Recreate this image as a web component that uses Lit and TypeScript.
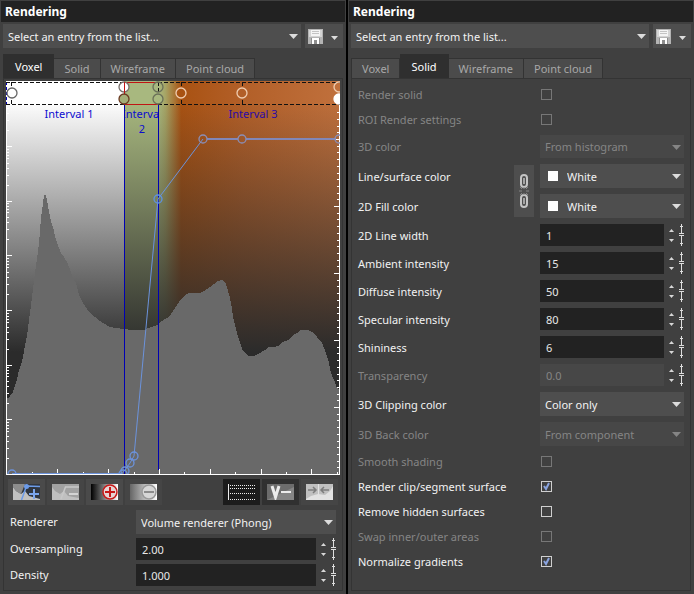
import { LitElement, html, css, svg, nothing } from "lit";
import { customElement, property } from "lit/decorators.js";

const controls = css`
  * { box-sizing: border-box; }
  button, input, select {
    margin: 0;
    padding: 0;
    border: 0;
    border-radius: 0;
    color: inherit;
    font: inherit;
    background: none;
  }
  svg { display: block; }
`;

/** Drop-down with the flat triangle and an optional colour swatch. */
@customElement("pick-list")
export class PickList extends LitElement {
  @property() value = "";
  @property() name = "";
  @property() swatch = "";
  @property({ type: Boolean }) disabled = false;

  static styles = [controls, css`
    :host { display: block; position: relative; height: 24px; background: #4e4e4e; color: #f2f2f2; }
    :host([disabled]) { background: #474747; color: #858585; }
    select { appearance: none; width: 100%; height: 100%; padding: 1px 18px 0 5px; opacity: 1; outline-offset: -1px; }
    .swatched { padding-left: 27px; }
    .swatch { position: absolute; left: 8px; top: 7px; width: 10px; height: 10px; pointer-events: none; }
    .arrow { position: absolute; right: 3px; top: 10px; pointer-events: none; fill: #dcdcdc; }
    :host([disabled]) .arrow { fill: #858585; }
  `];

  render() {
    return html`
      <select class=${this.swatch ? "swatched" : ""} aria-label=${this.name} ?disabled=${this.disabled}>
        <option>${this.value}</option>
      </select>
      ${this.swatch ? html`<span class="swatch" style="background:${this.swatch}"></span>` : nothing}
      <svg class="arrow" width="9" height="5"><path d="M0 0H9L4.5 5Z"/></svg>`;
  }
}

/** Number box with step arrows and a drag handle. */
@customElement("number-box")
export class NumberBox extends LitElement {
  @property() value = "";
  @property() name = "";
  @property({ type: Boolean }) disabled = false;

  static styles = [controls, css`
    :host { display: flex; height: 22px; color: #e8e8e8; }
    input { flex: 1; min-width: 0; padding: 1px 6px 0; background: #222; }
    input:disabled { background: #474747; color: #858585; }
    .steps { display: flex; flex-direction: column; justify-content: center; gap: 7px; width: 11px; margin-left: 2px; align-items: center; }
    .steps svg { fill: #d8d8d8; }
    .drag { width: 7px; }
  `];

  render() {
    return html`
      <input type="text" inputmode="decimal" aria-label=${this.name} .value=${this.value} ?disabled=${this.disabled}>
      <div class="steps">
        <button aria-label="Increase ${this.name}"><svg width="5" height="3"><path d="M0 3H5L2.5 0Z"/></svg></button>
        <button aria-label="Decrease ${this.name}"><svg width="5" height="3"><path d="M0 0H5L2.5 3Z"/></svg></button>
      </div>
      <button class="drag" aria-label="Drag ${this.name}">
        <svg width="7" height="22" fill="none" stroke="#dedede">
          <path d="M4.5 0V10M4.5 12V22M3 2.5H6M3 19.5H6M2 9.5H7M2 11.5H7"/>
        </svg>
      </button>`;
  }
}

/** Pane frame: title bar, preset row, tab strip and a bordered page. */
@customElement("render-pane")
export class RenderPane extends LitElement {
  @property() active = "";

  static styles = [controls, css`
    :host { display: flex; flex-direction: column; min-width: 0; background: #404040; padding: 1px 0 3px; }
    h2 { margin: 0 1px; padding: 0 4px; height: 21px; font-size: 12px; line-height: 21px; font-weight: 700; color: #fff; background: #222; }
    .presets { display: flex; gap: 4px; margin: 2px 3px 6px; }
    pick-list { flex: 1; }
    .save { display: flex; width: 38px; background: #4e4e4e; }
    .save button { display: flex; align-items: center; justify-content: center; }
    .disk { width: 21px; }
    .more { width: 17px; padding-top: 3px; }
    .tabs { display: flex; align-items: flex-end; margin: 0 3px; height: 24px; }
    .tab { height: 20px; padding: 0 10px; line-height: 20px; background: #4b4b4b; color: #a8a8a8; border: solid #333; border-width: 1px 1px 0 0; }
    .tab:first-child { border-left-width: 1px; }
    .tab.on { height: 24px; padding: 0 11px; line-height: 24px; background: #2f2f2f; color: #fff; border-color: #2f2f2f; }
    .page { flex: 1; margin: 0 3px; border: 1px solid #343434; }
  `];

  render() {
    return html`
      <h2>Rendering</h2>
      <div class="presets">
        <pick-list name="Preset" value="Select an entry from the list..."></pick-list>
        <div class="save">
          <button class="disk" aria-label="Save preset">
            <svg width="15" height="15">
              <path fill="#b4b4b4" d="M0 0H15V15H0Z"/>
              <path fill="#d4d4d4" d="M1 1H14V8H1Z"/>
              <path fill="#f4f4f4" d="M3 1H12V7H3Z"/>
              <path stroke="#c4c4c4" d="M4 2.5H11M4 4.5H11"/>
              <path fill="#8e8e8e" d="M3 9H12V15H3Z"/>
              <path fill="#fff" d="M4 9H11V15H9V11H6V15H4Z"/>
            </svg>
          </button>
          <button class="more" aria-label="Save options">
            <svg width="7" height="4" fill="#dcdcdc"><path d="M0 0H7L3.5 4Z"/></svg>
          </button>
        </div>
      </div>
      <div class="tabs" role="tablist">
        ${["Voxel", "Solid", "Wireframe", "Point cloud"].map((t) => html`
          <button role="tab" class="tab ${t === this.active ? "on" : ""}" aria-selected=${t === this.active}>${t}</button>`)}
      </div>
      <div class="page"><slot></slot></div>`;
  }
}

/** Histogram, transfer curve and colour stops of the voxel intervals. */
@customElement("transfer-plot")
export class TransferPlot extends LitElement {
  static styles = [controls, css`
    :host { display: block; }
    .plot { width: 100%; height: auto; }
    .caption { font: 11px "Noto Sans", sans-serif; text-anchor: middle; fill: #0c0cd0; }
    .caption.dark { fill: #2a0aa8; }
  `];

  private histogram =
    "7,474 7,398 9,398 11,394 13,393 14,388 17,380 19,370 22,362 24,351 27,336 29,320 31,305 33,289 35,273 37,259 39,243 41,218 43,203 44,195 46,195 48,205 49,212 51,221 53,227 55,236 57,243 61,253 64,257 67,262 71,272 73,278 76,283 78,291 80,297 83,303 87,309 91,314 95,317 100,321 105,324 110,327 115,328 125,329 130,330 145,330 148,328 152,327 157,325 162,321 167,318 171,314 175,308 179,302 183,297 186,294 189,293 200,293 204,291 210,287 214,284 218,281 222,280 225,282 227,287 230,298 232,308 233,317 235,325 237,333 240,343 243,351 246,354 249,356 254,356 260,353 265,350 269,347 274,347 278,346 283,342 288,340 292,336 297,333 301,330 308,330 312,332 317,337 322,343 326,353 329,363 331,373 334,380 337,388 339,390 339,474";

  private leftTicks() {
    let d = "";
    for (let k = 0; k < 7; k++) {
      const y = 474 - 55 * k + Math.round(k / 3);
      if (k) d += `M6 ${y + 0.5}h6`;
      for (let n = 2; n < 10; n++) {
        const m = Math.round(y - 54.7 * Math.log10(n));
        if (m > 106) d += `M6 ${m + 0.5}h3`;
      }
    }
    return d;
  }

  private rightTicks() {
    let d = "";
    for (let i = 1; i < 55; i++) {
      const y = Math.round(474 - 6.7 * i) + 0.5;
      d += i % 10 ? `M340 ${y}h-3` : `M340 ${y}h-6`;
    }
    return d;
  }

  private bottomTicks() {
    let d = "";
    for (let i = 1; i < 14; i++) {
      const x = Math.round(6.5 + 25.4 * i) + 0.5;
      d += i % 2 ? `M${x} 475v-3` : `M${x} 475v-6`;
    }
    return d;
  }

  render() {
    const ring = (x: number, y: number, stroke: string, fill = "none", r = 5) =>
      svg`<circle cx=${x} cy=${y} r=${r} stroke=${stroke} fill=${fill} stroke-width="1.3"/>`;
    return html`
      <svg class="plot" viewBox="6 81 334 394" role="img" aria-label="Histogram and transfer function">
        <defs>
          <linearGradient id="hues" gradientUnits="userSpaceOnUse" x1="158" x2="339" y1="0" y2="0">
            <stop offset="0" stop-color="#a8b87f"/>
            <stop offset="0.04" stop-color="#a6a566"/>
            <stop offset="0.128" stop-color="#a95212"/>
            <stop offset="0.46" stop-color="#b25f28"/>
            <stop offset="1" stop-color="#c0703c"/>
          </linearGradient>
          <linearGradient id="fade" gradientUnits="userSpaceOnUse" x1="0" x2="0" y1="100" y2="352">
            <stop offset="0" stop-color="#2b2b2b" stop-opacity="0"/>
            <stop offset="1" stop-color="#2b2b2b"/>
          </linearGradient>
          <clipPath id="second"><path d="M125 105H158V140H125Z"/></clipPath>
        </defs>
        <path fill="#fff" d="M6 81H124V475H6Z"/>
        <path fill="#a8b87f" d="M124 81H158V475H124Z"/>
        <path fill="url(#hues)" d="M158 81H340V475H158Z"/>
        <path fill="url(#fade)" d="M6 105H340V475H6Z"/>
        <polygon fill="#696969" shape-rendering="crispEdges" points=${this.histogram}/>

        <g fill="none" shape-rendering="crispEdges">
          <path stroke="#fff" d=${"M6.5 105V475M339.5 105V475M6 474.5H340" + this.leftTicks() + this.rightTicks() + this.bottomTicks()}/>
          <path stroke="#0000b4" d="M124.5 105V474M158.5 105V470"/>
          <path stroke="#0000b4" stroke-dasharray="3 2" d="M6.5 82V104"/>
          <path stroke="#111" stroke-dasharray="4 2" d="M6 82.5H124M158 82.5H340M6 104.5H124M158 104.5H340M11.5 82V104M158.5 82V104M181.5 82V104M242.5 82V104"/>
          <path stroke="#c01414" d="M158 82.5H124.5V104.5H158"/>
        </g>

        <text class="caption" x="69" y="118">Interval 1</text>
        <g clip-path="url(#second)">
          <text class="caption" x="142" y="118">Interval</text>
          <text class="caption" x="142" y="133">2</text>
        </g>
        <text class="caption dark" x="253" y="118">Interval 3</text>

        <g fill="none" stroke="#6c93dc">
          <path d="M12 473.5H122L125 470L130 463L134 456L158 199L203 139"/>
          <path stroke="#8187b8" stroke-width="2" d="M207 139H238M246 139H336"/>
        </g>
        ${ring(12, 474, "#6c93dc", "none", 4)}
        ${ring(123, 474, "#6c93dc", "none", 4)}
        ${ring(125, 471, "#6c93dc", "none", 4)}
        ${ring(130, 463, "#6c93dc", "none", 4)}
        ${ring(134, 456, "#6c93dc", "none", 4)}
        ${ring(158, 199, "#5f92e2", "none", 4)}
        ${ring(203, 139, "#8a8fb8", "none", 4)}
        ${ring(242, 139, "#8a8fb8", "none", 4)}
        ${ring(339, 139, "#8a8fb8", "none", 4)}
        <path fill="#fff" d="M6 474H340V475H6Z"/>

        ${ring(12, 93, "#666", "#fff")}
        ${ring(124, 87, "#776f6a", "#fff")}
        ${ring(124, 99, "#6b3a22", "#a3ae78")}
        ${ring(158, 87, "#6a7058")}
        ${ring(158, 99, "#6a7058", "#a8b87f")}
        ${ring(181, 93, "#f0cdb0", "#a95212")}
        ${ring(242, 93, "#f0cdb0", "#b25f28")}
        ${ring(339, 87, "#f0cdb0")}
        ${ring(339, 99, "#fff", "#fff")}
        <path stroke="#c01414" shape-rendering="crispEdges" d="M124.5 82V93"/>
      </svg>`;
  }
}

@customElement("app-root")
export class AppRoot extends LitElement {
  static styles = [controls, css`
    :host {
      display: grid;
      grid-template-columns: 1fr 2px 1fr;
      min-height: 100vh;
      background: #000;
      color: #f2f2f2;
      font: 11px/16px "Noto Sans", sans-serif;
    }
    .second { grid-column: 3; }
    transfer-plot { margin: 2px 2px 4px; }
    .tools { display: flex; gap: 2px; margin: 0 4px 5px; }
    .tools button { display: flex; align-items: center; justify-content: center; width: 37px; height: 26px; background: #4a4a4a; }
    .tools .pressed { background: #1c1c1c; }
    .tools .dark { background: #303030; }
    .tools .flat { background: #454545; }
    .gap { flex: 1; }
    .voxel { display: grid; grid-template-columns: 126px minmax(0, 1fr); align-items: center; gap: 4px 0; margin: 0 6px; }
    .row label { padding-top: 1px; }

    .solid { padding: 3px 6px; }
    .row { display: grid; grid-template-columns: 1fr 144px; align-items: center; }
    .check { height: 25px; }
    .list { padding: 3px 0; }
    .spin { height: 28px; }
    .off { color: #858585; }
    .short { height: 23px; }
    .colors { display: grid; grid-template-columns: 1fr 20px 144px; column-gap: 6px; align-items: center; }
    .colors label { grid-column: 1; height: 30px; padding-top: 1px; line-height: 30px; }
    .colors pick-list { grid-column: 3; }
    .link { grid-area: 1 / 2 / 3 / 3; height: 52px; background: #4e4e4e; }
    input[type="checkbox"] { appearance: none; width: 11px; height: 11px; margin-left: 1px; border: 1px solid #cfcfcf; }
    input[type="checkbox"]:disabled { border-color: #777; }
    input[type="checkbox"]:checked {
      background: url('data:image/svg+xml,<svg xmlns="http://www.w3.org/2000/svg" width="9" height="9"><path d="M2 4L4 7L7 1" fill="none" stroke="%238aa4e0" stroke-width="2"/></svg>');
    }
  `];

  private check(label: string, on = false, off = false) {
    const id = label.toLowerCase().replace(/\W+/g, "-");
    return html`<div class="row check ${off ? "off" : ""}">
      <label for=${id}>${label}</label>
      <input type="checkbox" id=${id} ?checked=${on} ?disabled=${off}>
    </div>`;
  }

  private list(label: string, value: string, off = false, short = false) {
    return html`<div class="row list ${off ? "off" : ""}">
      <label>${label}</label>
      <pick-list class=${short ? "short" : ""} name=${label} value=${value} ?disabled=${off}></pick-list>
    </div>`;
  }

  private spin(label: string, value: string, off = false) {
    return html`<div class="row spin ${off ? "off" : ""}">
      <label>${label}</label>
      <number-box name=${label} value=${value} ?disabled=${off}></number-box>
    </div>`;
  }

  render() {
    return html`
      <render-pane active="Voxel">
        <transfer-plot></transfer-plot>
        <div class="tools">
          <button aria-label="Add curve point">
            <svg width="27" height="16">
              <path fill="#30363f" d="M0 0H27V16H0Z"/>
              <path fill="#8c8c8c" d="M0 0H12L8 10L3 7L0 3Z"/>
              <path fill="#c0c0c0" d="M0 3L3 7L8 10L12 7L16 12L27 15V16H0Z"/>
              <path fill="none" stroke="#6c9be8" stroke-width="1.5" d="M8.500 16L13.500 2L27 2.500"/>
              <circle cx="13.5" cy="2.5" r="2.500" fill="#6c9be8"/>
              <path stroke="#7ba5ec" stroke-width="2" d="M16 10H26M21 5V15"/>
            </svg>
          </button>
          <button class="flat" aria-label="Remove curve point">
            <svg width="27" height="16">
              <path fill="#c0c0c0" d="M0 0H27V16H0Z"/>
              <path fill="#a2a2a2" d="M0 0H27V14L16 12L12 7L8 10L3 7L0 3Z"/>
              <path fill="none" stroke="#c8c8c8" stroke-width="1.500" d="M9 15L13.500 3H27"/>
              <path stroke="#d4d4d4" stroke-width="2" d="M17 10H26"/>
            </svg>
          </button>
          <button aria-label="Add color point">
            <svg width="27" height="16">
              <defs><linearGradient id="black"><stop stop-color="#000"/><stop offset="1" stop-color="#fff"/></linearGradient></defs>
              <path fill="url(#black)" d="M0 0H27V16H0Z"/>
              <circle cx="19" cy="8" r="7" fill="#e6d4d4" stroke="#c81818" stroke-width="1.5"/>
              <path stroke="#c81818" stroke-width="2" d="M14 8H24M19 3V13"/>
            </svg>
          </button>
          <button class="flat" aria-label="Remove color point">
            <svg width="27" height="16">
              <defs><linearGradient id="gray"><stop stop-color="#666"/><stop offset="1" stop-color="#fff"/></linearGradient></defs>
              <path fill="url(#gray)" d="M0 0H27V16H0Z"/>
              <circle cx="19" cy="8" r="7" fill="#d6d6d6" stroke="#999" stroke-width="1.5"/>
              <path stroke="#8c8c8c" stroke-width="2" d="M14 8H24"/>
            </svg>
          </button>
          <span class="gap"></span>
          <button class="pressed" aria-label="Show grid">
            <svg width="27" height="16" fill="none" stroke="#eee">
              <path d="M.5 0V16"/><path stroke-dasharray="1 1" d="M2 1.500H27M2 4.500H27M2 9.500H27M2 15.500H27"/>
            </svg>
          </button>
          <button class="dark" aria-label="Show values">
            <svg width="27" height="16">
              <path fill="#6c6c6c" d="M0 0H27V16H0Z"/><path fill="#858585" d="M0 16L27 3V16Z"/>
              <path fill="none" stroke="#ececec" stroke-width="3" d="M5 2L8.500 13L12 2"/>
              <path stroke="#ececec" stroke-width="2" d="M14 8H24"/>
            </svg>
          </button>
          <button class="flat" aria-label="Fit range">
            <svg width="27" height="16">
              <path fill="#c0c0c0" d="M0 0H27V16H0Z"/>
              <path fill="#e2e2e2" d="M0 16V15L5 12L12 10L19 11L24 7L27 2V16Z"/>
              <path stroke="#e2e2e2" d="M12.500 0V16"/>
              <path fill="none" stroke="#7c7c7c" stroke-width="1.500" d="M2 6H10M7 3L10 6L7 9M23 6H15M18 3L15 6L18 9"/>
            </svg>
          </button>
        </div>
        <div class="voxel">
          <label>Renderer</label>
          <pick-list name="Renderer" value="Volume renderer (Phong)"></pick-list>
          <label>Oversampling</label>
          <number-box name="Oversampling" value="2.00"></number-box>
          <label>Density</label>
          <number-box name="Density" value="1.000"></number-box>
        </div>
      </render-pane>

      <render-pane class="second" active="Solid">
        <div class="solid">
          ${this.check("Render solid", false, true)}
          ${this.check("ROI Render settings", false, true)}
          ${this.list("3D color", "From histogram", true, true)}
          <div class="colors">
            <label>Line/surface color</label>
            <pick-list name="Line/surface color" value="White" swatch="#fff"></pick-list>
            <label>2D Fill color</label>
            <pick-list name="2D Fill color" value="White" swatch="#fff"></pick-list>
            <button class="link" aria-label="Link colors">
              <svg width="20" height="52" fill="none">
                <g stroke="#c4c4c4" stroke-width="2"><rect x="7" y="10" width="6" height="12" rx="3"/><rect x="7" y="30" width="6" height="12" rx="3"/></g>
                <path stroke="#a4a4a4" stroke-width="2" d="M10 13V19M10 33V39"/>
                <path stroke="#858585" d="M10 22V24M10 28V30M5 26H8M12 26H15M6 22L8 24M14 22L12 24M6 30L8 28M14 30L12 28"/>
              </svg>
            </button>
          </div>
          ${this.spin("2D Line width", "1")}
          ${this.spin("Ambient intensity", "15")}
          ${this.spin("Diffuse intensity", "50")}
          ${this.spin("Specular intensity", "80")}
          ${this.spin("Shininess", "6")}
          ${this.spin("Transparency", "0.0", true)}
          ${this.list("3D Clipping color", "Color only")}
          ${this.list("3D Back color", "From component", true)}
          ${this.check("Smooth shading", false, true)}
          ${this.check("Render clip/segment surface", true)}
          ${this.check("Remove hidden surfaces")}
          ${this.check("Swap inner/outer areas", false, true)}
          ${this.check("Normalize gradients", true)}
        </div>
      </render-pane>`;
  }
}
